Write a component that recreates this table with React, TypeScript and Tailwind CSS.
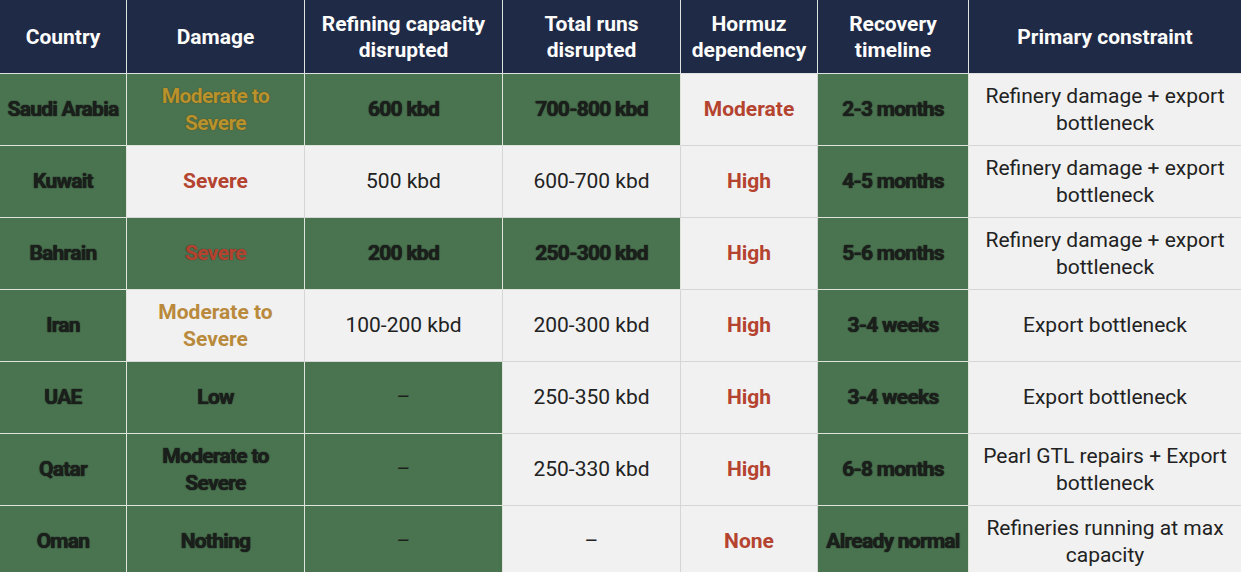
type Kind = 'dark' | 'red' | 'gold' | 'redg' | 'goldg' | 'plain' | 'dash'
type Cell = { t: string; g: boolean; k: Kind }

const headers = [
  'Country',
  'Damage',
  'Refining capacity disrupted',
  'Total runs disrupted',
  'Hormuz dependency',
  'Recovery timeline',
  'Primary constraint',
]

const c = (t: string, g: boolean, k: Kind): Cell => ({ t, g, k })

const rows: Cell[][] = [
  [
    c('Saudi Arabia', true, 'dark'),
    c('Moderate to Severe', true, 'goldg'),
    c('600 kbd', true, 'dark'),
    c('700-800 kbd', true, 'dark'),
    c('Moderate', false, 'red'),
    c('2-3 months', true, 'dark'),
    c('Refinery damage + export bottleneck', false, 'plain'),
  ],
  [
    c('Kuwait', true, 'dark'),
    c('Severe', false, 'red'),
    c('500 kbd', false, 'plain'),
    c('600-700 kbd', false, 'plain'),
    c('High', false, 'red'),
    c('4-5 months', true, 'dark'),
    c('Refinery damage + export bottleneck', false, 'plain'),
  ],
  [
    c('Bahrain', true, 'dark'),
    c('Severe', true, 'redg'),
    c('200 kbd', true, 'dark'),
    c('250-300 kbd', true, 'dark'),
    c('High', false, 'red'),
    c('5-6 months', true, 'dark'),
    c('Refinery damage + export bottleneck', false, 'plain'),
  ],
  [
    c('Iran', true, 'dark'),
    c('Moderate to Severe', false, 'gold'),
    c('100-200 kbd', false, 'plain'),
    c('200-300 kbd', false, 'plain'),
    c('High', false, 'red'),
    c('3-4 weeks', true, 'dark'),
    c('Export bottleneck', false, 'plain'),
  ],
  [
    c('UAE', true, 'dark'),
    c('Low', true, 'dark'),
    c('–', true, 'dash'),
    c('250-350 kbd', false, 'plain'),
    c('High', false, 'red'),
    c('3-4 weeks', true, 'dark'),
    c('Export bottleneck', false, 'plain'),
  ],
  [
    c('Qatar', true, 'dark'),
    c('Moderate to Severe', true, 'dark'),
    c('–', true, 'dash'),
    c('250-330 kbd', false, 'plain'),
    c('High', false, 'red'),
    c('6-8 months', true, 'dark'),
    c('Pearl GTL repairs + Export bottleneck', false, 'plain'),
  ],
  [
    c('Oman', true, 'dark'),
    c('Nothing', true, 'dark'),
    c('–', true, 'dash'),
    c('–', false, 'plain'),
    c('None', false, 'red'),
    c('Already normal', true, 'dark'),
    c('Refineries running at max capacity', false, 'plain'),
  ],
]

const kindClass: Record<Kind, string> = {
  dark: 'font-bold text-[#1b1f1b] tracking-[-0.035em] [text-shadow:0_0_1px_#1b1f1b,0_0_1px_#1b1f1b]',
  red: 'font-bold text-[#b4432f]',
  gold: 'font-bold text-[#b98a3c]',
  redg: 'font-bold text-[#b4432f] tracking-[-0.03em] [text-shadow:0_0_1px_#3a2a20]',
  goldg: 'font-bold text-[#b8922c] tracking-[-0.03em] [text-shadow:0_0_1px_#4a3a10]',
  plain: 'font-normal text-[#222222]',
  dash: 'font-normal text-[#1b1f1b]',
}

export default function App() {
  return (
    <div className="w-[1241px] h-[572px] overflow-hidden bg-[#f1f1f1] font-['Roboto',sans-serif] text-[21px] leading-[27px]">
      <div className="grid grid-cols-[127px_178px_198px_178px_137px_151px_272px] grid-rows-[74px_repeat(7,72px)]">
        {headers.map((h, i) => (
          <div
            key={h}
            className={`flex items-center justify-center px-2 text-center bg-[#1f2a47] text-white font-bold leading-[26px] border-b border-[#dfe3df] ${i < 6 ? 'border-r' : ''}`}
          >
            {h}
          </div>
        ))}
        {rows.map((r, ri) =>
          r.map((cell, ci) => (
            <div
              key={`${ri}-${ci}`}
              className={`flex items-center justify-center text-center border-b ${ci === 1 ? 'px-4' : 'px-1'} ${ci < 6 ? 'border-r' : ''} ${
                cell.g ? 'bg-[#4a7350] border-[#dfe5dd]' : 'bg-[#f1f1f1] border-[#d6d6d6]'
              } ${kindClass[cell.k]}`}
            >
              {cell.t}
            </div>
          ))
        )}
      </div>
    </div>
  )
}
